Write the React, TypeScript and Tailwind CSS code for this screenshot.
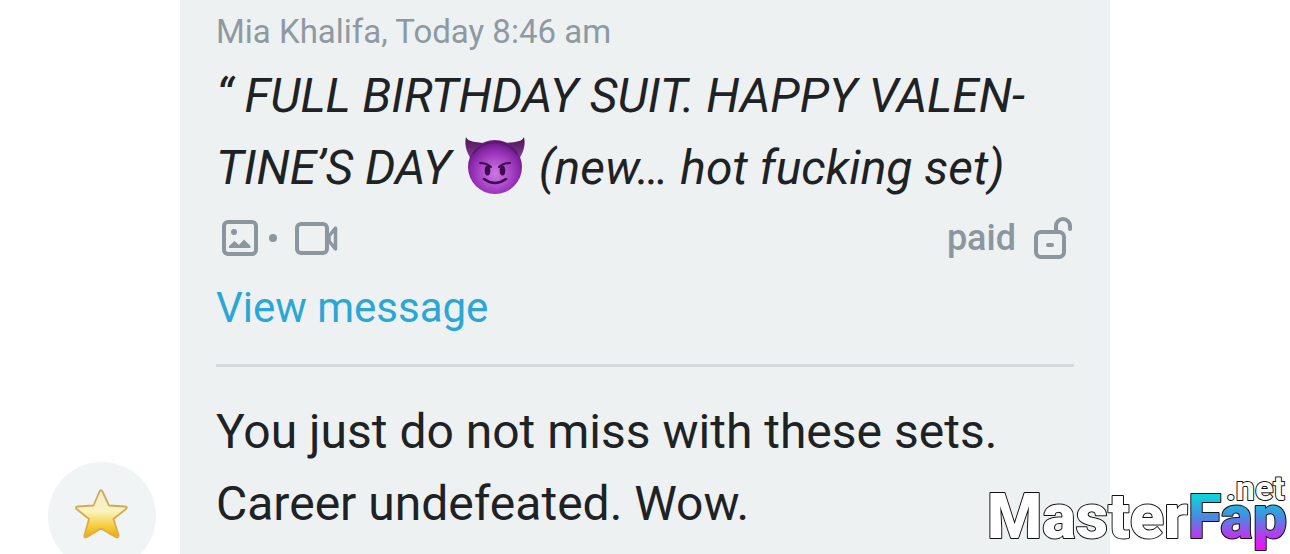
const message = {
  sender: 'Mia Khalifa',
  time: 'Today 8:46 am',
  status: 'paid',
  reply: 'You just do not miss with these sets. Career undefeated. Wow.',
};

function DevilEmoji() {
  return (
    <svg role="img" aria-label="smiling devil" viewBox="0 0 60 58" className="mx-[2px] inline-block h-[58px] w-[60px] align-[-11px]">
      <defs>
        <radialGradient id="devil-face" cx="0.5" cy="0.62" r="0.55">
          <stop offset="0" stopColor="#cb7be2" />
          <stop offset="0.5" stopColor="#ab48c8" />
          <stop offset="0.85" stopColor="#8a26aa" />
          <stop offset="1" stopColor="#6d2087" />
        </radialGradient>
        <linearGradient id="devil-horn" x1="0" y1="0" x2="0" y2="1">
          <stop offset="0" stopColor="#4a1450" />
          <stop offset="1" stopColor="#8a3a9c" />
        </linearGradient>
      </defs>
      <path d="M1 0C3 5 10 5 19 6L6 22C2 16 -1 8 1 0Z" fill="url(#devil-horn)" />
      <path d="M59 0C57 5 50 5 41 6L54 22C58 16 61 8 59 0Z" fill="url(#devil-horn)" />
      <circle cx="30" cy="30" r="27" fill="url(#devil-face)" />
      <path d="M8 17A26.500 26.500 0 0 1 52 17" fill="none" stroke="#591870" strokeWidth="2" />
      <g fill="none" stroke="#3f0c4f" strokeLinecap="round">
        <path d="M15 26Q22 26 26 30M45 26Q38 26 34 30" strokeWidth="2" />
        <path d="M19 42Q30 50 41 42" strokeWidth="2.600" />
      </g>
      <ellipse cx="22.500" cy="33.500" rx="2.800" ry="5" fill="#3f0c4f" />
      <ellipse cx="37.500" cy="33.500" rx="2.800" ry="5" fill="#3f0c4f" />
    </svg>
  );
}

function StarEmoji() {
  return (
    <svg role="img" aria-label="star" viewBox="0 0 54 52" className="h-[52px] w-[54px]">
      <defs>
        <linearGradient id="star-fill" x1="0" y1="0" x2="0" y2="1">
          <stop offset="0" stopColor="#f1ead0" />
          <stop offset="0.45" stopColor="#faf3bd" />
          <stop offset="0.75" stopColor="#f5cf3f" />
          <stop offset="1" stopColor="#e9a91f" />
        </linearGradient>
        <linearGradient id="star-edge" x1="0" y1="0" x2="0" y2="1">
          <stop offset="0" stopColor="#c9a862" />
          <stop offset="1" stopColor="#e6ad35" />
        </linearGradient>
      </defs>
      <path
        d="M24.500 3.500Q26 1 27.500 3.500L34 17.500L50 18.500Q53 19 51 21L38.500 31L43.500 47Q44 50.500 40.500 49L26 40.500L12 49Q8.500 50.500 9.500 47L14 31L1.500 21Q0 19 2.500 18.500L18.500 17.500Z"
        fill="url(#star-fill)"
        stroke="url(#star-edge)"
        strokeWidth="1.800"
        strokeLinejoin="round"
      />
    </svg>
  );
}

function ImageIcon() {
  return (
    <svg role="img" aria-label="photo" viewBox="0 0 36 36" className="size-9">
      <rect x="2" y="2" width="32" height="32" rx="4" fill="none" stroke="currentColor" strokeWidth="4" />
      <circle cx="12" cy="12" r="3" fill="currentColor" />
      <path d="M7 28V26L12.500 21L17 25L22 19.500L28.500 26V28Z" fill="currentColor" />
    </svg>
  );
}

function VideoIcon() {
  return (
    <svg role="img" aria-label="video" viewBox="0 0 43 33" className="h-[33px] w-[43px]">
      <g fill="none" stroke="currentColor" strokeWidth="4" strokeLinejoin="round">
        <rect x="2" y="2" width="30" height="29" rx="4" />
        <path d="M34 14L40.500 6V27L34 19Z" strokeWidth="3.500" />
      </g>
    </svg>
  );
}

function UnlockIcon() {
  return (
    <svg role="img" aria-label="unlocked" viewBox="0 0 38 42" className="h-[42px] w-[38px]">
      <g fill="none" stroke="currentColor" strokeWidth="4" strokeLinecap="round">
        <rect x="2" y="15" width="28" height="25" rx="5" />
        <path d="M22 14V9A7 7 0 0 1 36 9V12" />
        <path d="M14 28H18" />
      </g>
    </svg>
  );
}

function SiteLogo() {
  return (
    <svg viewBox="0 0 310 90" className="h-[90px] w-[310px]" fontFamily="Roboto, sans-serif" fontWeight="900">
      <defs>
        <linearGradient id="logo-fill" gradientUnits="userSpaceOnUse" x1="0" y1="28" x2="0" y2="86">
          <stop offset="0" stopColor="#08dfd8" />
          <stop offset="0.4" stopColor="#3f92e2" />
          <stop offset="0.75" stopColor="#b63cea" />
          <stop offset="1" stopColor="#fb0cfa" />
        </linearGradient>
      </defs>
      <g stroke="#111" strokeWidth="2" strokeLinejoin="round" paintOrder="stroke">
        <text x="7" y="74" fontSize="63" fill="#fff">Master</text>
        <text x="208" y="74" fontSize="61" fill="url(#logo-fill)">Fap</text>
        <text x="246" y="36" fontSize="34" fontWeight="700" fill="#fff">.net</text>
      </g>
    </svg>
  );
}

export default function App() {
  return (
    <div className="relative flex min-h-screen overflow-hidden bg-white font-[Roboto,sans-serif] text-[#1e2224]">
      <aside className="flex w-[180px] shrink-0 items-end pl-12">
        <div className="-mb-4 flex size-[108px] items-center justify-center rounded-full bg-[#f0f4f5] pb-1">
          <StarEmoji />
        </div>
      </aside>

      <main className="mr-[180px] min-w-0 flex-1 bg-[#edf1f2] px-9 pt-3 pb-3">
        <p className="text-[33px] leading-10 text-[#8f99a2]">
          {message.sender}, {message.time}
        </p>
        <blockquote className="mt-2 text-[48px] leading-[72px] italic">
          “ FULL BIRTHDAY SUIT. HAPPY VALEN&shy;TINE’S DAY <DevilEmoji /> (new… hot fucking set)
        </blockquote>

        <div className="flex h-[68px] items-center justify-between pr-[2px] pl-[6px] text-[#8b969e]">
          <div className="flex items-center">
            <ImageIcon />
            <span className="mx-[11px] size-2 rounded-full bg-[#8b969e]" />
            <span className="pl-[7px]">
              <VideoIcon />
            </span>
          </div>
          <div className="flex items-center gap-[18px]">
            <span className="text-[36px] leading-10 font-medium">{message.status}</span>
            <UnlockIcon />
          </div>
        </div>

        <a href="#message" className="mt-2 inline-block text-[42px] leading-[56px] text-[#2ba6d5]">
          View message
        </a>
        <hr className="mt-7 border-t-[3px] border-[#d4d9db]" />
        <p className="mt-[29px] text-[48px] leading-[72px]">{message.reply}</p>
      </main>

      <div className="absolute right-0 bottom-0">
        <SiteLogo />
      </div>
    </div>
  );
}
